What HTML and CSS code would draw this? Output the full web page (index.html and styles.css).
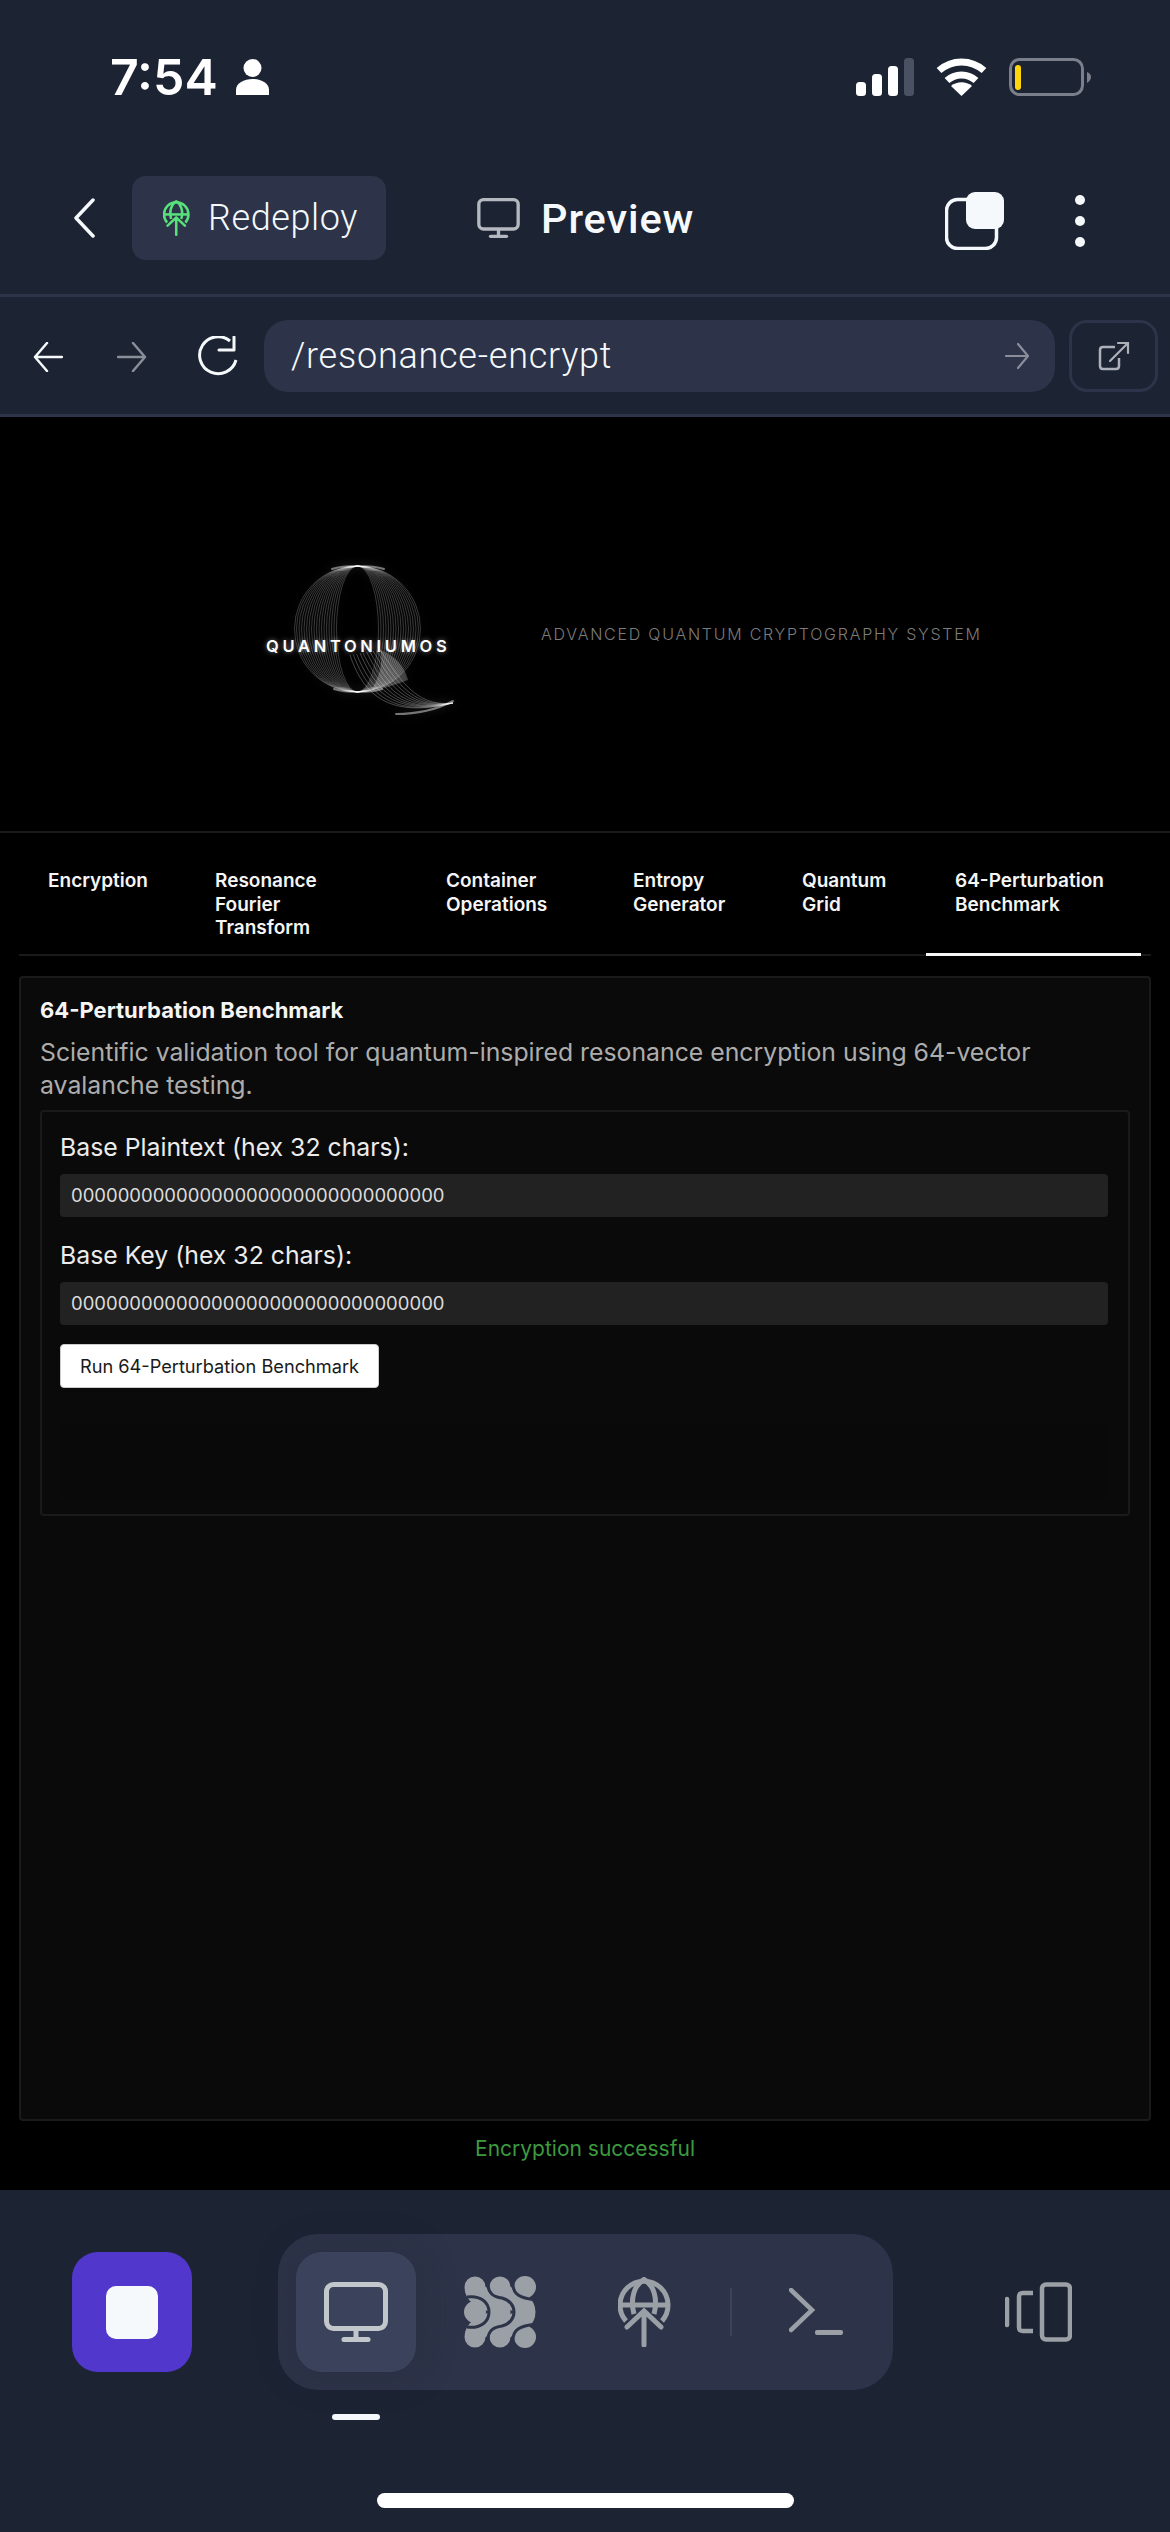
FILE: index.html
```html
<!DOCTYPE html>
<html lang="en">
<head>
<meta charset="utf-8">
<title>Preview</title>
<link rel="stylesheet" href="styles.css">
</head>
<body>
<svg class="defs" width="0" height="0" aria-hidden="true">
  <symbol id="i-globe" viewBox="0 0 53 70">
    <g fill="none" stroke="currentColor" stroke-width="5" stroke-linecap="round">
      <path stroke-linecap="butt" d="M8 44A24 24 0 1 1 44 44"/>
      <path stroke-linecap="butt" d="M16 37C12 22 16 8 26 2.500C36 8 40 22 36 37"/>
      <path stroke-linecap="butt" d="M3 28H49"/>
      <path d="M9 50L26 34L43 50M26 35V68"/>
    </g>
  </symbol>
  <symbol id="i-monitor" viewBox="0 0 64 60">
    <g fill="none" stroke="currentColor" stroke-width="5" stroke-linecap="round">
      <rect x="2.500" y="2.500" width="59" height="44" rx="7"/>
      <path stroke-linecap="butt" d="M32 47V57"/>
      <path d="M20 57.500H44"/>
    </g>
  </symbol>
</svg>

<div class="status">
  <div class="clock">
    <span class="time">7:54</span>
    <svg class="person" viewBox="0 0 33 36"><circle cx="16.500" cy="9" r="9"/><path d="M0 36V31C0 24 8 20 16.500 20S33 24 33 31V36Z"/></svg>
  </div>
  <div class="sys">
    <svg class="signal" width="58" height="38" viewBox="0 0 58 38">
      <rect x="0" y="24" width="10" height="14" rx="3.500" fill="#fff"/>
      <rect x="16" y="16" width="10" height="22" rx="3.500" fill="#fff"/>
      <rect x="32" y="8" width="10" height="30" rx="3.500" fill="#fff"/>
      <rect x="48" y="0" width="10" height="38" rx="3.500" fill="#4a5162"/>
    </svg>
    <svg class="wifi" width="51" height="38" viewBox="0 0 51 38">
      <path d="M3 12.500C16 1 35 1 48 12.500" fill="none" stroke="#fff" stroke-width="7"/>
      <path d="M11 22.500C19 15 32 15 40 22.500" fill="none" stroke="#fff" stroke-width="7"/>
      <path d="M25.500 38L15 28C21 23 30 23 36 28Z" fill="#fff"/>
    </svg>
    <svg class="battery" width="82" height="38" viewBox="0 0 82 38">
      <rect x="1.500" y="1.500" width="72" height="35" rx="9" fill="none" stroke="#7b7f8b" stroke-width="3"/>
      <rect x="6" y="7" width="6" height="25" rx="3" fill="#ffd60a"/>
      <path d="M78 14C81 15 82 17 82 19S81 23 78 25Z" fill="#7b7f8b"/>
    </svg>
  </div>
</div>

<header class="appbar">
  <svg class="chev" width="22" height="40" viewBox="0 0 22 40"><path d="M20 2L3 20L20 38" fill="none" stroke="#f5f9fc" stroke-width="3.500" stroke-linecap="round" stroke-linejoin="round"/></svg>
  <div class="pill">
    <svg class="pill-ico"><use href="#i-globe"/></svg>
    <span class="pill-text">Redeploy</span>
  </div>
  <div class="title">
    <svg class="title-ico"><use href="#i-monitor"/></svg>
    <span class="title-text">Preview</span>
  </div>
  <div class="actions">
    <svg class="tabs-ico" width="59" height="58" viewBox="0 0 59 58">
      <rect x="1.500" y="7.500" width="50" height="49" rx="11" fill="none" stroke="#f5f9fc" stroke-width="3.500"/>
      <rect x="21" y="0" width="38" height="37" rx="9" fill="#f5f9fc"/>
    </svg>
    <div class="dots"><i></i><i></i><i></i></div>
  </div>
</header>

<nav class="toolbar">
  <svg class="nav-back" width="30" height="30" viewBox="0 0 30 30"><path d="M29 15H2M14 1L2 15L14 29" fill="none" stroke="#f5f9fc" stroke-width="2.500" stroke-linecap="round" stroke-linejoin="round"/></svg>
  <svg class="nav-fwd" width="30" height="30" viewBox="0 0 30 30"><path d="M1 15H28M16 1L28 15L16 29" fill="none" stroke="#8a8e99" stroke-width="2.500" stroke-linecap="round" stroke-linejoin="round"/></svg>
  <svg class="nav-reload" width="44" height="40" viewBox="0 0 44 40"><path d="M34 5A18.500 18.500 0 1 0 40 24" fill="none" stroke="#f5f9fc" stroke-width="3"/><path d="M38 1V14H23" fill="none" stroke="#f5f9fc" stroke-width="3" stroke-linecap="round" stroke-linejoin="round"/></svg>
  <div class="url">
    <span class="url-text">/resonance-encrypt</span>
    <svg width="25" height="28" viewBox="0 0 25 28"><path d="M1 14H23M13 2L23 14L13 26" fill="none" stroke="#8a8e99" stroke-width="2.200" stroke-linecap="round" stroke-linejoin="round"/></svg>
  </div>
  <div class="ext">
    <svg width="32" height="30" viewBox="0 0 32 30"><path d="M17 6H5C3 6 2 7 2 9V25C2 27 3 28 5 28H18C20 28 21 27 21 25V17" fill="none" stroke="#aeb1ba" stroke-width="2.500"/><path d="M12 20L30 2M20 2H30V12" fill="none" stroke="#aeb1ba" stroke-width="2.200" stroke-linecap="round"/></svg>
  </div>
</nav>

<main class="page">
  <section class="hero">
    <div class="logo">
      <svg class="q" width="165" height="152" viewBox="0 0 165 152">
        <g fill="none" stroke="#fff" stroke-width=".9" stroke-opacity=".24">
          <ellipse cx="63.500" cy="64" rx="21" ry="63"/><ellipse cx="63.500" cy="64" rx="23.500" ry="63"/>
          <ellipse cx="63.500" cy="64" rx="26" ry="63"/><ellipse cx="63.500" cy="64" rx="28.500" ry="63"/>
          <ellipse cx="63.500" cy="64" rx="31" ry="63"/><ellipse cx="63.500" cy="64" rx="33.500" ry="63"/>
          <ellipse cx="63.500" cy="64" rx="36" ry="63"/><ellipse cx="63.500" cy="64" rx="38.500" ry="63"/>
          <ellipse cx="63.500" cy="64" rx="41" ry="63"/><ellipse cx="63.500" cy="64" rx="43.500" ry="63"/>
          <ellipse cx="63.500" cy="64" rx="46" ry="63"/><ellipse cx="63.500" cy="64" rx="48.500" ry="63"/>
          <ellipse cx="63.500" cy="64" rx="51" ry="63"/><ellipse cx="63.500" cy="64" rx="53.500" ry="63"/>
          <ellipse cx="63.500" cy="64" rx="56" ry="63"/><ellipse cx="63.500" cy="64" rx="58.500" ry="63"/>
          <ellipse cx="63.500" cy="64" rx="61" ry="63"/><ellipse cx="63.500" cy="64" rx="63" ry="63"/>
        </g>
        <g fill="none" stroke="#fff" stroke-width=".9" stroke-opacity=".3">
          <path d="M56 90C68 125 90 155 159 138"/><path d="M59.300 89.500C72 123 93 154 159 138"/>
          <path d="M62.600 89C76 122 97 152 159 138"/><path d="M66 88C80 120 100 151 159 138"/>
          <path d="M69 88C84 118 103 150 159 138"/><path d="M72.500 87C88 117 106 148 159 138"/>
          <path d="M76 87C92 115 110 147 159 138"/><path d="M79 86C96 113 113 146 159 138"/>
          <path d="M82.400 85.600C100 112 116 144 159 138"/><path d="M86 85C104 110 120 143 159 138"/>
        </g>
        <path d="M86 85C100 90 110 100 114 115C100 120 90 124 78 125C85 110 90 100 86 85Z" fill="#fff" fill-opacity=".24"/>
        <g fill="none" stroke="#fff" stroke-width="2" stroke-opacity=".45" stroke-linecap="round">
          <path d="M38 4C50 0 78 0 90 4"/><path d="M40 124C52 128 76 128 88 124"/>
          <path d="M102 149C120 149 140 146 159 136"/>
        </g>
      </svg>
      <span class="logo-text">QUANTONIUMOS</span>
    </div>
    <p class="tagline">ADVANCED QUANTUM CRYPTOGRAPHY SYSTEM</p>
  </section>

  <div class="tabs">
    <div class="tab">Encryption</div>
    <div class="tab tab-narrow">Resonance Fourier Transform</div>
    <div class="tab">Container Operations</div>
    <div class="tab">Entropy Generator</div>
    <div class="tab">Quantum Grid</div>
    <div class="tab tab-active">64-Perturbation Benchmark</div>
  </div>

  <section class="card">
    <h2 class="card-title">64-Perturbation Benchmark</h2>
    <p class="card-desc">Scientific validation tool for quantum-inspired resonance encryption using 64-vector avalanche testing.</p>
    <div class="panel">
      <div class="label">Base Plaintext (hex 32 chars):</div>
      <div class="field">00000000000000000000000000000000</div>
      <div class="label">Base Key (hex 32 chars):</div>
      <div class="field">00000000000000000000000000000000</div>
      <button class="run" type="button">Run 64-Perturbation Benchmark</button>
      <div class="output"></div>
    </div>
  </section>

  <p class="ok">Encryption successful</p>
</main>

<footer class="dock">
  <div class="dock-row">
    <div class="stop"><i></i></div>
    <div class="seg">
      <div class="seg-btn seg-active"><svg class="seg-mon"><use href="#i-monitor"/></svg></div>
      <div class="seg-btn">
        <svg class="seg-pat" width="72" height="72" viewBox="0 0 72 72" fill="#9ba0a6">
          <circle cx="61" cy="11" r="11"/><circle cx="11" cy="36" r="11"/><circle cx="61" cy="61" r="11"/>
          <g fill="none" stroke="#9ba0a6" stroke-width="21" stroke-linecap="round">
            <path d="M11 11C11 25 36 22 36 36C36 50 11 47 11 61"/>
            <path d="M36 11C36 25 61 22 61 36C61 50 36 47 36 61"/>
          </g>
          <g fill="none" stroke="#2d3348" stroke-width="3">
            <path d="M3 21C16 19 25 26 25 36C25 46 16 53 3 51"/>
            <path d="M24 0V8C24 18 30 21 38 22C46 24 50 30 50 36C50 42 46 48 38 50C30 51 24 54 24 64V72"/>
            <path d="M49 0V8C49 18 55 22 72 24"/>
            <path d="M72 48C55 50 49 54 49 64V72"/>
          </g>
        </svg>
      </div>
      <div class="seg-btn"><svg class="seg-globe"><use href="#i-globe"/></svg></div>
      <i class="seg-div"></i>
      <svg class="seg-term" width="54" height="48" viewBox="0 0 54 48"><path d="M2 2L23 22L2 42" fill="none" stroke="#9ba0a6" stroke-width="4.500" stroke-linecap="round" stroke-linejoin="miter"/><rect x="26" y="42" width="28" height="5" rx="2" fill="#9ba0a6"/></svg>
    </div>
    <svg class="panes" width="67" height="60" viewBox="0 0 67 60" fill="none" stroke="#9ba0a6" stroke-width="4.500">
      <rect x="37" y="2.500" width="28" height="55" rx="4"/>
      <path d="M28 11H18C15 11 14 12 14 15V45C14 48 15 49 18 49H28"/>
      <path d="M2 17V43" stroke-linecap="round"/>
    </svg>
  </div>
  <div class="marker-row"><i class="marker"></i></div>
  <div class="home"></div>
</footer>
</body>
</html>
```

FILE: styles.css
```css
* { box-sizing: border-box; }
html, body { margin: 0; padding: 0; }
body {
  width: 1170px;
  height: 2532px;
  overflow: hidden;
  display: flex;
  flex-direction: column;
  background: #1c2333;
  color: #f5f9fc;
  font-family: "Inter", "Liberation Sans", sans-serif;
}
.defs { position: absolute; }

/* status bar */
.status {
  height: 176px;
  padding: 58px 79px 0 110px;
  display: flex;
  justify-content: space-between;
  align-items: flex-start;
  flex: none;
}
.clock { display: flex; align-items: center; gap: 18px; height: 38px; }
.time { font-family: "Inter", sans-serif; font-size: 50px; font-weight: 600; line-height: 38px; color: #fff; letter-spacing: 0; }
.person { width: 33px; height: 36px; fill: #fff; }
.sys { display: flex; align-items: flex-start; gap: 22px; }

/* app bar */
.appbar {
  flex: none;
  height: 121px;
  border-bottom: 3px solid #2d3348;
  display: flex;
  align-items: flex-start;
  padding-left: 73px;
}
.chev { margin-top: 22px; flex: none; }
.pill {
  margin-left: 37px;
  width: 254px;
  height: 84px;
  border-radius: 14px;
  background: #2d3348;
  display: flex;
  align-items: center;
  padding-left: 31px;
  gap: 18px;
}
.pill-ico { width: 27px; height: 36px; color: #58e07b; }
.pill-text { font-family: "Roboto", sans-serif; font-size: 36px; font-weight: 300; letter-spacing: .6px; color: #f5f9fc; }
.title { margin-left: 91px; height: 84px; display: flex; align-items: center; gap: 21px; }
.title-ico { width: 43px; height: 40px; color: #b4b9bf; }
.title-text { font-family: "Roboto", sans-serif; font-size: 41.500px; font-weight: 500; color: #f5f9fc; letter-spacing: .9px; }
.actions { margin-left: auto; padding-right: 85px; height: 84px; display: flex; align-items: center; gap: 71px; }
.tabs-ico { margin-top: 6px; }
.dots { display: flex; flex-direction: column; gap: 11px; margin-top: 6px; }
.dots i { display: block; width: 10px; height: 10px; border-radius: 50%; background: #f5f9fc; }

/* toolbar */
.toolbar {
  flex: none;
  height: 120px;
  border-bottom: 3px solid #2d3348;
  display: flex;
  align-items: flex-start;
  padding: 23px 12px 0 33px;
}
.nav-back { margin-top: 22px; }
.nav-fwd { margin: 22px 0 0 54px; }
.nav-reload { margin: 16px 0 0 49px; }
.url {
  margin-left: 24px;
  width: 791px;
  height: 72px;
  border-radius: 24px;
  background: #2d3348;
  display: flex;
  align-items: center;
  justify-content: space-between;
  padding: 0 25px 0 27px;
}
.url-text { font-family: "Roboto", sans-serif; font-size: 36px; font-weight: 300; letter-spacing: .75px; color: #f5f9fc; }
.ext {
  margin-left: 14px;
  width: 89px;
  height: 72px;
  border-radius: 18px;
  border: 3px solid #2d3348;
  display: flex;
  align-items: center;
  justify-content: center;
}

/* page */
.page {
  flex: none;
  height: 1773px;
  background: #000;
  display: flex;
  flex-direction: column;
}
.hero {
  flex: none;
  height: 416px;
  border-bottom: 2px solid #1a1a1a;
  padding: 148px 0 0 294px;
  display: flex;
  align-items: flex-start;
}
.logo { position: relative; width: 165px; height: 152px; flex: none; }
.q { display: block; filter: blur(.5px) drop-shadow(0 0 5px rgba(255,255,255,.2)); }
.logo-text {
  position: absolute;
  left: -28px;
  top: 71px;
  font-size: 16.500px;
  font-weight: 600;
  letter-spacing: 3.700px;
  line-height: 20px;
  color: #fff;
  white-space: nowrap;
  text-shadow: 0 0 5px rgba(255,255,255,.5);
}
.tagline {
  margin: 59px 0 0 82px;
  font-size: 16px;
  font-weight: 300;
  letter-spacing: 1.750px;
  line-height: 20px;
  color: #7c7c7c;
  white-space: nowrap;
}

/* tabs */
.tabs {
  flex: none;
  margin: 0 19px;
  height: 123px;
  border-bottom: 2px solid #1a1a1a;
  display: grid;
  grid-template-columns: 167px 231px 187px 169px 153px 215px;
}
.tab {
  padding: 36px 20px 0 29px;
  font-size: 19px;
  font-weight: 600;
  line-height: 23.700px;
  color: #f5f5f5;
  height: 123px;
}
.tab-narrow { padding-right: 50px; }
.tab-active { border-bottom: 3px solid #f5f5f5; }

/* card */
.card {
  flex: none;
  margin: 20px 19px 0;
  height: 1145px;
  background: #0a0a0a;
  border: 2px solid #1a1a1a;
  border-radius: 4px;
  padding: 18px 19px 0;
}
.card-title { margin: 0; font-size: 22px; font-weight: 700; line-height: 28px; color: #f5f5f5; }
.card-desc { margin: 12px 0 0; font-size: 24.800px; font-weight: 400; line-height: 33px; color: #adadad; }
.panel {
  margin-top: 8px;
  height: 406px;
  border: 2px solid #1a1a1a;
  border-radius: 4px;
  padding: 18px 20px 0 18px;
}
.label { font-size: 24.800px; line-height: 34px; color: #ececec; font-weight: 400; }
.field {
  margin: 10px 0 21px;
  height: 43px;
  background: #222;
  border-radius: 4px;
  padding: 0 11px;
  font-size: 18.500px;
  line-height: 43px;
  color: #dcdcdc;
}
.run {
  display: block;
  margin-top: -2px;
  width: 319px;
  height: 44px;
  background: #fff;
  border: 1px solid #ccc;
  border-radius: 4px;
  font-family: "Inter", sans-serif;
  font-size: 18.200px;
  color: #1a1a1a;
  padding: 0;
}
.output { margin-top: 37px; height: 73px; background: #090909; }
.ok {
  margin: 16px 0 0;
  text-align: center;
  font-size: 21px;
  line-height: 24px;
  color: #3d9a3f;
}

/* dock */
.dock {
  flex: none;
  height: 342px;
  position: relative;
  padding-top: 44px;
}
.dock-row { display: flex; align-items: center; height: 156px; padding-left: 72px; }
.stop {
  width: 120px;
  height: 120px;
  border-radius: 26px;
  background: #5237cc;
  display: flex;
  align-items: center;
  justify-content: center;
}
.stop i { display: block; width: 52px; height: 53px; border-radius: 10px; background: #f5f9fc; }
.seg {
  margin-left: 86px;
  width: 615px;
  height: 156px;
  border-radius: 40px;
  background: #2d3348;
  display: flex;
  align-items: center;
  padding-left: 18px;
}
.seg-btn { width: 120px; height: 120px; border-radius: 26px; display: flex; align-items: center; justify-content: center; flex: none; }
.seg-btn + .seg-btn { margin-left: 24px; }
.seg-active { background: #3b435c; box-shadow: 0 0 40px rgba(28,35,51,.25); }
.seg-mon { width: 64px; height: 60px; color: #c2c7cc; }
.seg-globe { width: 53px; height: 70px; color: #9ba0a6; }
.seg-div { display: block; width: 2px; height: 48px; background: #3b435c; margin-left: 26px; }
.seg-term { margin-left: 57px; margin-top: -1px; }
.panes { margin-left: 112px; }
.marker-row { padding: 24px 0 0 332px; }
.marker { display: block; width: 48px; height: 6px; border-radius: 3px; background: #f5f9fc; }
.home {
  position: absolute;
  left: 377px;
  top: 303px;
  width: 417px;
  height: 15px;
  border-radius: 8px;
  background: #fff;
}
```
